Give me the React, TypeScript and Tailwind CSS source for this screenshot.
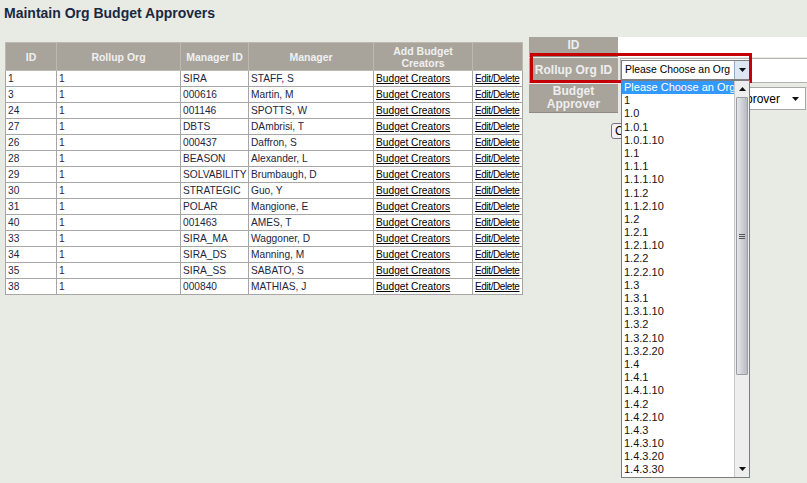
import React from "react";

type Approver = {
  id: string;
  org: string;
  managerId: string;
  manager: string;
};

const approvers: Approver[] = [
  { id: "1", org: "1", managerId: "SIRA", manager: "STAFF, S" },
  { id: "3", org: "1", managerId: "000616", manager: "Martin, M" },
  { id: "24", org: "1", managerId: "001146", manager: "SPOTTS, W" },
  { id: "27", org: "1", managerId: "DBTS", manager: "DAmbrisi, T" },
  { id: "26", org: "1", managerId: "000437", manager: "Daffron, S" },
  { id: "28", org: "1", managerId: "BEASON", manager: "Alexander, L" },
  { id: "29", org: "1", managerId: "SOLVABILITY", manager: "Brumbaugh, D" },
  { id: "30", org: "1", managerId: "STRATEGIC", manager: "Guo, Y" },
  { id: "31", org: "1", managerId: "POLAR", manager: "Mangione, E" },
  { id: "40", org: "1", managerId: "001463", manager: "AMES, T" },
  { id: "33", org: "1", managerId: "SIRA_MA", manager: "Waggoner, D" },
  { id: "34", org: "1", managerId: "SIRA_DS", manager: "Manning, M" },
  { id: "35", org: "1", managerId: "SIRA_SS", manager: "SABATO, S" },
  { id: "38", org: "1", managerId: "000840", manager: "MATHIAS, J" },
];

const orgs = [
  "1", "1.0", "1.0.1", "1.0.1.10", "1.1", "1.1.1", "1.1.1.10", "1.1.2", "1.1.2.10",
  "1.2", "1.2.1", "1.2.1.10", "1.2.2", "1.2.2.10", "1.3", "1.3.1", "1.3.1.10",
  "1.3.2", "1.3.2.10", "1.3.2.20", "1.4", "1.4.1", "1.4.1.10", "1.4.2", "1.4.2.10",
  "1.4.3", "1.4.3.10", "1.4.3.20", "1.4.3.30",
];

const th = "h-[28px] border border-[#bdb9b1] bg-[#a8a49c] px-[2px] text-center text-[10.5px] font-bold leading-[12px] text-[#f0f0f0] align-middle overflow-hidden whitespace-normal";
const td = "h-[16px] border border-[#a6a6a6] bg-white px-[2px] text-[10.2px] leading-[14px] text-[#1d2640] whitespace-nowrap overflow-hidden";
const label = "bg-[#a8a49c] border-b border-[#8f8b84] text-center text-[12px] font-bold text-[#eeeeee] leading-[13px] flex items-center justify-center overflow-hidden";

const Arrow = ({ up }: { up?: boolean }) => (
  <svg width="7" height="4" viewBox="0 0 7 4">
    <path d={up ? "M0 4 L3.5 0 L7 4 Z" : "M0 0 L7 0 L3.5 4 Z"} fill="#111" />
  </svg>
);

export default function App() {
  return (
    <div className="relative w-[807px] h-[483px] overflow-hidden bg-[#e7ebe3] font-['Liberation_Sans',Arial,sans-serif]">
      <h1 className="pl-1 pt-[5px] text-[14px] font-bold leading-[17px] text-[#1a2842]">
        Maintain Org Budget Approvers
      </h1>

      <div className="flex items-start gap-[6px] pl-[5px]">
        <table className="mt-[20px] w-[517px] table-fixed border-collapse">
          <colgroup>
            <col className="w-[51px]" />
            <col className="w-[124px]" />
            <col className="w-[68px]" />
            <col className="w-[125px]" />
            <col className="w-[99px]" />
            <col className="w-[50px]" />
          </colgroup>
          <thead>
            <tr>
              <th className={th}>ID</th>
              <th className={th}>Rollup Org</th>
              <th className={`${th} whitespace-nowrap`}>Manager ID</th>
              <th className={th}>Manager</th>
              <th className={th}>Add Budget Creators</th>
              <th className={th}></th>
            </tr>
          </thead>
          <tbody>
            {approvers.map((a) => (
              <tr key={a.id}>
                <td className={td}>{a.id}</td>
                <td className={td}>{a.org}</td>
                <td className={td}>{a.managerId}</td>
                <td className={td}>{a.manager}</td>
                <td className={td}>
                  <span className="text-black underline">Budget Creators</span>
                </td>
                <td className={`${td} px-[1px] text-[10px] tracking-[-0.4px]`}>
                  <span className="text-black underline">Edit/Delete</span>
                </td>
              </tr>
            ))}
          </tbody>
        </table>

        {/* edit form */}
        <div className="mt-[15px] w-[279px] shrink-0">
          <div className="flex h-[20px]">
            <div className={`${label} w-[89px] items-start pt-[2px]`}>ID</div>
            <div className="flex-1 bg-white" />
          </div>
          <div className="mt-[1px] flex h-[25px]">
            <div className={`${label} w-[89px]`}>Rollup Org ID</div>
            <div className="ml-[2px] flex-1 border border-[#b4b4b4] bg-white pt-[1px]">
              <div className="flex h-[20px] w-[130px] items-center border border-[#7f7f7f] bg-white">
                <span className="flex-1 overflow-hidden pl-[3px] text-[10.4px] text-black whitespace-nowrap">Please Choose an Org</span>
                <span className="flex h-full w-[16px] shrink-0 items-center justify-center border-l border-[#9aa8bf] bg-[#dde6f3]">
                  <Arrow />
                </span>
              </div>
            </div>
          </div>
          <div className="mt-[1px] flex h-[29px]">
            <div className={`${label} w-[89px]`}>
              Budget
              <br />
              Approver
            </div>
            <div className="ml-[5px] mt-[3px] flex h-[23px] w-[183px] items-center justify-end border border-[#a8a8a8] bg-white pr-[6px]">
              <span className="text-[12px] text-black whitespace-nowrap">Select an Approver</span>
              <span className="ml-[12px]">
                <Arrow />
              </span>
            </div>
          </div>
          <div className="mt-[5px] pl-[82px]">
            <button className="h-[16px] rounded-[3px] border border-[#7a6f8a] bg-[#f2f2f0] px-[3px] text-[12px] leading-[14px] text-black">
              Create
            </button>
          </div>
        </div>
      </div>

      {/* highlight around the org picker */}
      <div className="pointer-events-none absolute left-[530px] top-[53px] h-[30px] w-[222px] border-[3px] border-[#c40000]" />

      {/* open org list */}
      <div className="absolute left-[621px] top-[80px] flex h-[398px] w-[129px] border border-[#7d7d7d] bg-white">
        <ul className="flex-1 overflow-hidden">
          <li className="h-[13.2px] bg-[#3399ff] pl-[2px] text-[11px] leading-[13px] text-white whitespace-nowrap">
            Please Choose an Org
          </li>
          {orgs.map((o) => (
            <li key={o} className="h-[13.2px] pl-[2px] text-[11px] leading-[13px] text-[#1a1014]">
              {o}
            </li>
          ))}
        </ul>
        <div className="flex w-[15px] flex-col border-l border-[#c8c8c8] bg-[#eeeeee]">
          <div className="flex h-[16px] items-center justify-center">
            <Arrow up />
          </div>
          <div className="mx-[1px] flex h-[278px] items-center justify-center rounded-[1px] border border-[#9d9da6] bg-gradient-to-r from-[#e6e6ea] to-[#b9b9c2]">
            <div className="flex flex-col gap-[1px]">
              <span className="h-px w-[6px] bg-[#555]" />
              <span className="h-px w-[6px] bg-[#555]" />
              <span className="h-px w-[6px] bg-[#555]" />
            </div>
          </div>
          <div className="flex-1" />
          <div className="flex h-[16px] items-center justify-center">
            <Arrow />
          </div>
        </div>
      </div>
    </div>
  );
}
